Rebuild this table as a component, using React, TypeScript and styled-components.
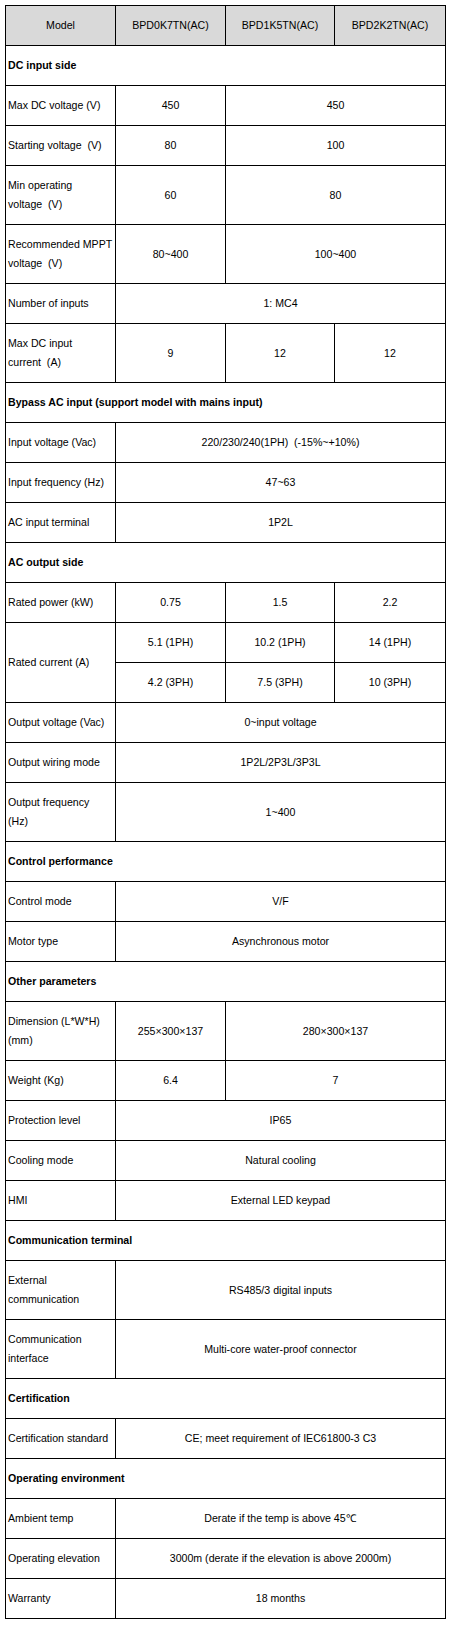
import React from "react";
import styled, { createGlobalStyle } from "styled-components";

const GlobalStyle = createGlobalStyle`
  body {
    margin: 5px;
    background: #fff;
    font-family: "Liberation Sans", Arial, sans-serif;
  }
`;

const SpecTable = styled.table`
  width: 440px;
  border-collapse: collapse;
  table-layout: fixed;
  font-size: 10.6px;
  line-height: 19px;
  color: #000;
`;

const HeadCell = styled.th`
  border: 1px solid #000;
  background: #d9d9d9;
  font-weight: normal;
  padding: 10px 2px;
  text-align: center;
  vertical-align: middle;
`;

const Cell = styled.td<{ $label?: boolean }>`
  border: 1px solid #000;
  padding: 10px 2px;
  text-align: ${(p) => (p.$label ? "left" : "center")};
  white-space: ${(p) => (p.$label ? "pre" : "normal")};
  vertical-align: middle;
`;

const SectionCell = styled.td`
  border: 1px solid #000;
  padding: 10px 2px;
  font-weight: bold;
  text-align: left;
`;

type Value = string | [string, number];
type Row = { section: string } | { label: string; values: Value[] };

const sp = "\u00a0";

const rows: Row[] = [
  { section: "DC input side" },
  { label: "Max DC voltage (V)", values: ["450", ["450", 2]] },
  { label: `Starting voltage${sp} (V)`, values: ["80", ["100", 2]] },
  { label: `Min operating\nvoltage${sp} (V)`, values: ["60", ["80", 2]] },
  { label: `Recommended MPPT\nvoltage${sp} (V)`, values: ["80~400", ["100~400", 2]] },
  { label: "Number of inputs", values: [["1: MC4", 3]] },
  { label: `Max DC input\ncurrent${sp} (A)`, values: ["9", "12", "12"] },
  { section: "Bypass AC input (support model with mains input)" },
  { label: "Input voltage (Vac)", values: [[`220/230/240(1PH)${sp} (-15%~+10%)`, 3]] },
  { label: "Input frequency (Hz)", values: [["47~63", 3]] },
  { label: "AC input terminal", values: [["1P2L", 3]] },
  { section: "AC output side" },
  { label: "Rated power (kW)", values: ["0.75", "1.5", "2.2"] },
];

const rowsAfterCurrent: Row[] = [
  { label: "Output voltage (Vac)", values: [["0~input voltage", 3]] },
  { label: "Output wiring mode", values: [["1P2L/2P3L/3P3L", 3]] },
  { label: "Output frequency\n(Hz)", values: [["1~400", 3]] },
  { section: "Control performance" },
  { label: "Control mode", values: [["V/F", 3]] },
  { label: "Motor type", values: [["Asynchronous motor", 3]] },
  { section: "Other parameters" },
  { label: "Dimension (L*W*H)\n(mm)", values: ["255×300×137", ["280×300×137", 2]] },
  { label: "Weight (Kg)", values: ["6.4", ["7", 2]] },
  { label: "Protection level", values: [["IP65", 3]] },
  { label: "Cooling mode", values: [["Natural cooling", 3]] },
  { label: "HMI", values: [["External LED keypad", 3]] },
  { section: "Communication terminal" },
  { label: "External\ncommunication", values: [["RS485/3 digital inputs", 3]] },
  { label: "Communication\ninterface", values: [["Multi-core water-proof connector", 3]] },
  { section: "Certification" },
  { label: "Certification standard", values: [["CE; meet requirement of IEC61800-3 C3", 3]] },
  { section: "Operating environment" },
  { label: "Ambient temp", values: [["Derate if the temp is above 45℃", 3]] },
  { label: "Operating elevation", values: [["3000m (derate if the elevation is above 2000m)", 3]] },
  { label: "Warranty", values: [["18 months", 3]] },
];

function renderRow(row: Row, i: number) {
  if ("section" in row) {
    return (
      <tr key={row.section}>
        <SectionCell colSpan={4}>{row.section}</SectionCell>
      </tr>
    );
  }
  return (
    <tr key={row.label + i}>
      <Cell $label>{row.label}</Cell>
      {row.values.map((v, j) =>
        Array.isArray(v) ? (
          <Cell key={j} colSpan={v[1]}>
            {v[0]}
          </Cell>
        ) : (
          <Cell key={j}>{v}</Cell>
        )
      )}
    </tr>
  );
}

export default function App() {
  return (
    <>
      <GlobalStyle />
      <SpecTable>
        <colgroup>
          <col style={{ width: 110 }} />
          <col style={{ width: 110 }} />
          <col style={{ width: 109 }} />
          <col style={{ width: 111 }} />
        </colgroup>
        <thead>
          <tr>
            <HeadCell>Model</HeadCell>
            <HeadCell>BPD0K7TN(AC)</HeadCell>
            <HeadCell>BPD1K5TN(AC)</HeadCell>
            <HeadCell>BPD2K2TN(AC)</HeadCell>
          </tr>
        </thead>
        <tbody>
          {rows.map(renderRow)}
          <tr>
            <Cell $label rowSpan={2}>
              Rated current (A)
            </Cell>
            <Cell>5.1 (1PH)</Cell>
            <Cell>10.2 (1PH)</Cell>
            <Cell>14 (1PH)</Cell>
          </tr>
          <tr>
            <Cell>4.2 (3PH)</Cell>
            <Cell>7.5 (3PH)</Cell>
            <Cell>10 (3PH)</Cell>
          </tr>
          {rowsAfterCurrent.map(renderRow)}
        </tbody>
      </SpecTable>
    </>
  );
}
